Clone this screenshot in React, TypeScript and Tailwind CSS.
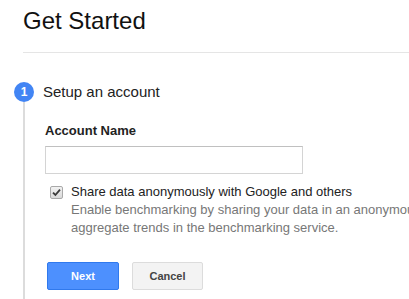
import React from "react";

function StepBadge({ n }: { n: number }) {
  return (
    <div className="w-[20px] h-[20px] rounded-full bg-[#4285f4] text-white text-[12px] font-bold leading-[20px] text-center">
      {n}
    </div>
  );
}

function CheckBox() {
  // old-style greyed checkbox, drawn by hand
  return (
    <div className="w-[13px] h-[13px] rounded-[2px] border border-[#a9a9a9] bg-gradient-to-b from-[#f2f2f2] to-[#d9d9d9] flex items-center justify-center">
      <svg width="9" height="9" viewBox="0 0 9 9">
        <path d="M1 4.6 L3.4 7 L8 1.6" fill="none" stroke="#3a3a3a" strokeWidth="1.8" />
      </svg>
    </div>
  );
}

export default function App() {
  return (
    <div className="w-[409px] h-[299px] overflow-hidden bg-white flex flex-col font-['Liberation_Sans',Arial,sans-serif] text-[#222]">
      <header className="pl-[23px]">
        <h1 className="pt-[7px] text-[24px] leading-[28px] text-[#111]">Get Started</h1>
        <div className="mt-[17px] h-px bg-[#e5e5e5]" />
      </header>

      <section className="mt-[29px] flex flex-1 min-h-0">
        {/* step rail */}
        <div className="ml-[14px] w-[20px] flex flex-col items-center">
          <StepBadge n={1} />
          <div className="w-[2px] flex-1 bg-[#dcdcdc]" />
        </div>

        <div className="ml-[9px] flex-1 min-w-0">
          <h2 className="text-[15px] leading-[20px]">Setup an account</h2>

          <div className="pl-[2px]">
            <label className="block mt-[21px] text-[13px] leading-[16px] font-bold">Account Name</label>
            <input
              type="text"
              className="mt-[7px] block w-[258px] h-[28px] border border-[#d4d4d4] border-t-[#c0c0c0] outline-none px-2 text-[13px]"
            />

            <div className="mt-[9px] flex">
              <div className="ml-[5px] h-[18px] flex items-center">
                <CheckBox />
              </div>
              <div className="ml-[8px] text-[13px] leading-[18px] whitespace-nowrap">
                <div>Share data anonymously with Google and others</div>
                <div className="text-[#777]">
                  Enable benchmarking by sharing your data in an anonymous form. Google will remove all identifiable
                  information about your website.
                </div>
                <div className="text-[#777]">aggregate trends in the benchmarking service.</div>
              </div>
            </div>

            <div className="mt-[25px] ml-[2px] flex gap-[13px]">
              <button className="w-[72px] h-[28px] rounded-[2px] border border-[#3079ed] bg-[#4d90fe] text-white text-[11px] font-bold">
                Next
              </button>
              <button className="w-[71px] h-[28px] rounded-[2px] border border-[#dcdcdc] bg-[#f3f3f3] text-[#444] text-[11px] font-bold">
                Cancel
              </button>
            </div>
          </div>
        </div>
      </section>
    </div>
  );
}
